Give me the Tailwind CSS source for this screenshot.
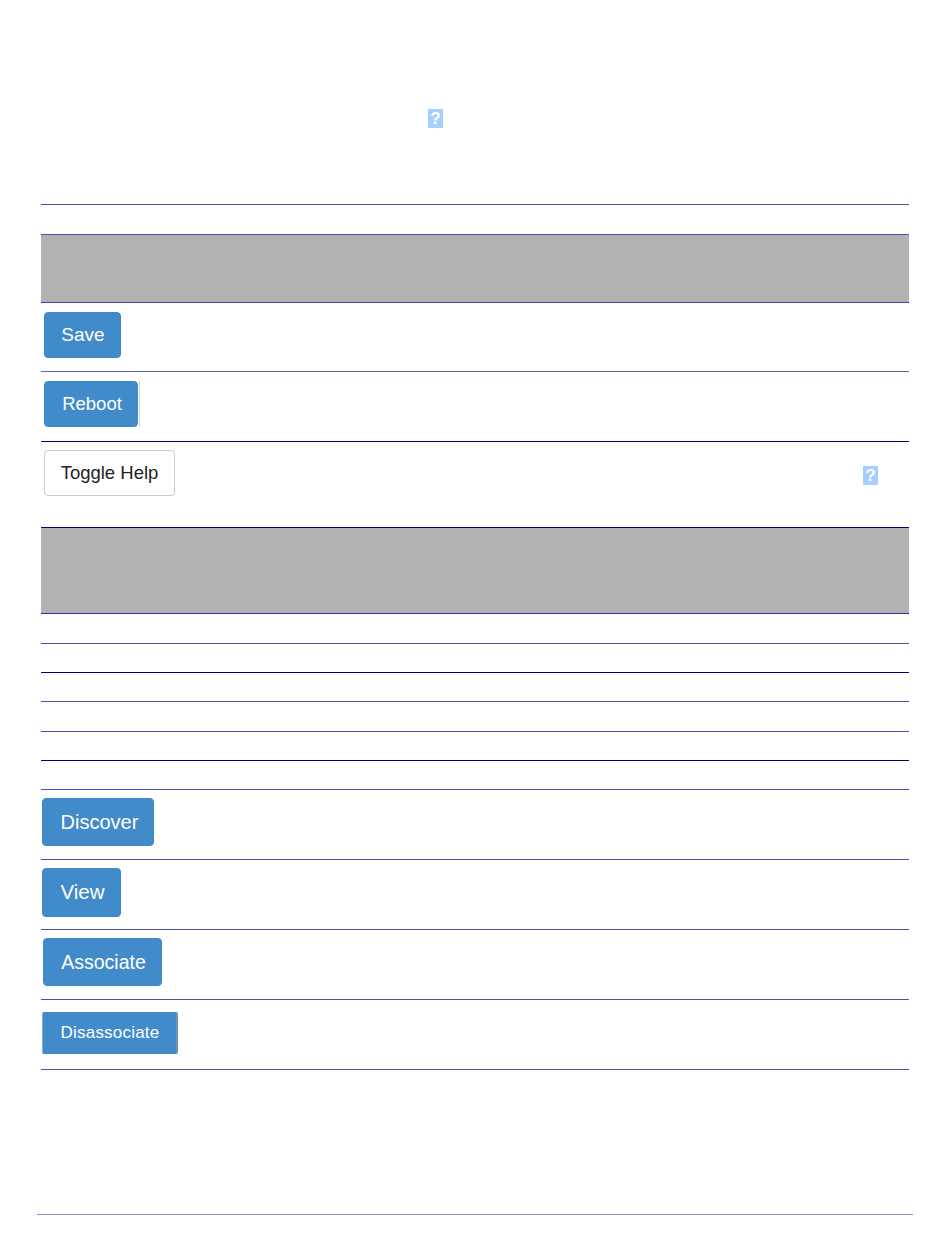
<!DOCTYPE html>
<html>
<head>
<meta charset="utf-8">
<script src="https://cdn.jsdelivr.net/npm/@tailwindcss/browser@4"></script>
</head>
<body class="bg-white font-['Liberation_Sans',Arial,sans-serif]">
<div class="w-[950px] h-[1260px] overflow-hidden">
  <div class="ml-[41px] w-[868px]">
    <div class="box-border h-[205px] border-b border-[#4f4fb0] pt-[109px] pl-[387px]">
      <span class="flex h-[19px] w-[15px] items-center justify-center bg-[#a6ceff] text-[17px] font-bold leading-none text-white">?</span>
    </div>
    <div class="box-border h-[30px] border-b border-[#4f4fb0]"></div>
    <div class="box-border h-[68px] border-b border-[#4040a6] bg-[#b2b2b2]"></div>
    <div class="box-border h-[69px] border-b border-[#6262b6] pt-[9px] pl-[3px]">
      <button class="block h-[46px] w-[77px] rounded-[4px] border border-[#3f87c5] bg-[#428bca] pl-[1px] text-[19px] text-white">Save</button>
    </div>
    <div class="box-border h-[70px] border-b border-[#000080] pt-[9px] pl-[3px]">
      <div class="w-[96px] border-r border-[#d0d0d0]">
        <button class="block h-[46px] w-[94px] rounded-[4px] border border-[#3f87c5] bg-[#428bca] pl-[2px] text-[18.5px] text-white">Reboot</button>
      </div>
    </div>
    <div class="box-border flex h-[86px] items-start justify-between border-b border-[#000080] pt-[8px] pr-[31px] pl-[3px]">
      <button class="block h-[46px] w-[131px] rounded-[4px] border border-[#cccccc] bg-white text-[18.5px] text-[#222222]">Toggle Help</button>
      <span class="mt-[16px] flex h-[19px] w-[15px] items-center justify-center bg-[#a6ceff] text-[17px] font-bold leading-none text-white">?</span>
    </div>
    <div class="box-border h-[86px] border-b border-[#3030a0] bg-[#b2b2b2]"></div>
    <div class="box-border h-[30px] border-b border-[#4f4fb0]"></div>
    <div class="box-border h-[29px] border-b border-[#000080]"></div>
    <div class="box-border h-[29px] border-b border-[#4f4fb0]"></div>
    <div class="box-border h-[30px] border-b border-[#4f4fb0]"></div>
    <div class="box-border h-[29px] border-b border-[#000080]"></div>
    <div class="box-border h-[29px] border-b border-[#4f4fb0]"></div>
    <div class="box-border h-[70px] border-b border-[#4f4fb0] pt-[8px] pl-[1px]">
      <button class="block h-[48px] w-[112px] rounded-[4px] border border-[#3f87c5] bg-[#428bca] pl-[3px] text-[20px] text-white">Discover</button>
    </div>
    <div class="box-border h-[70px] border-b border-[#4f4fb0] pt-[8px] pl-[1px]">
      <button class="block h-[49px] w-[79px] rounded-[4px] border border-[#3f87c5] bg-[#428bca] pl-[2px] text-[20.5px] text-white">View</button>
    </div>
    <div class="box-border h-[70px] border-b border-[#4f4fb0] pt-[8px] pl-[2px]">
      <button class="block h-[48px] w-[119px] rounded-[4px] border border-[#3f87c5] bg-[#428bca] pt-[1px] pl-[2px] text-[19.5px] text-white">Associate</button>
    </div>
    <div class="box-border h-[70px] border-b border-[#4f4fb0] pt-[12px] pl-[1px]">
      <button class="box-border block h-[42px] w-[136px] rounded-[2px] border-t border-r-2 border-b border-l border-t-[#3f87c5] border-r-[#6f93b5] border-b-[#3f87c5] border-l-[#7fb0dc] bg-[#428bca] pl-[1px] text-[17px] tracking-[0.2px] text-white">Disassociate</button>
    </div>
  </div>
  <div class="mt-[144px] ml-[37px] h-px w-[876px] bg-[#8f8fcb]"></div>
</div>
</body>
</html>
